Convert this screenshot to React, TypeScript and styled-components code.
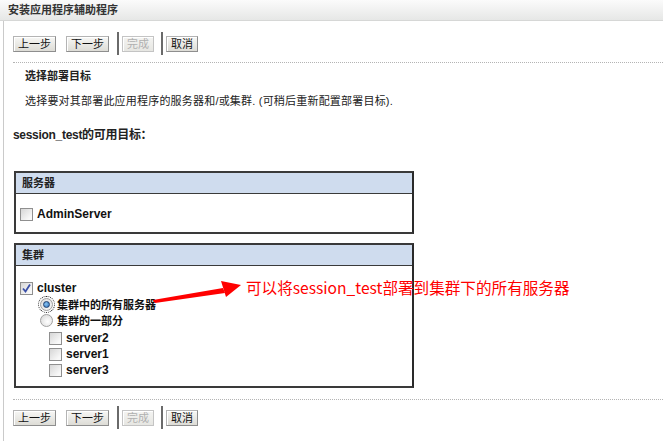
import React from 'react';
import styled, { createGlobalStyle, css } from 'styled-components';

const GlobalStyle = createGlobalStyle`
  html, body {
    margin: 0;
    padding: 0;
    background: #fff;
  }
  body {
    font-family: "Liberation Sans", "Noto Sans CJK SC", sans-serif;
    font-size: 11px;
    color: #222;
  }
`;

const Page = styled.div`
  position: relative;
  width: 663px;
  height: 441px;
  overflow: hidden;
`;

const TitleBar = styled.div`
  height: 20px;
  line-height: 20px;
  padding-left: 8px;
  font-weight: bold;
  font-size: 11px;
  color: #333;
  background: linear-gradient(#fbfbfb, #e6e7e6);
  border-bottom: 1px solid #d6d7d6;
`;

const Body = styled.div`
  margin-left: 3px;
  border-left: 1px solid #cacaca;
  padding-left: 9px;
  height: 420px;
  display: flex;
  flex-direction: column;
`;

const Toolbar = styled.div<{ $top: number }>`
  display: flex;
  align-items: center;
  height: 23px;
  margin-top: ${p => p.$top}px;
`;

const Btn = styled.div<{ $disabled?: boolean; $gap?: number }>`
  height: 14px;
  line-height: 14px;
  padding: 0 4px;
  margin-left: ${p => p.$gap ?? 0}px;
  font-size: 11px;
  color: #111;
  border: 1px solid #8e8e8e;
  border-top-color: #b4b4b4;
  border-left-color: #b4b4b4;
  box-shadow: inset 1px 1px 0 #fff;
  background: linear-gradient(#f7f7f5, #dddcd6);
  ${p => p.$disabled && css`
    color: #b0b0b0;
    border-color: #c4c4c4;
    background: linear-gradient(#f4f4f2, #e6e6e2);
  `}
`;

const Sep = styled.div<{ $gap: number }>`
  width: 2px;
  height: 23px;
  margin-left: ${p => p.$gap}px;
  background: #6a6a6a;
`;

const Dotted = styled.div<{ $top: number }>`
  margin-top: ${p => p.$top}px;
  border-top: 1px dotted #b4b4b4;
  height: 0;
`;

const SectionTitle = styled.div`
  margin-top: 5px;
  padding-left: 12px;
  line-height: 16px;
  font-weight: bold;
`;

const Description = styled.div`
  margin-top: 9px;
  padding-left: 12px;
  line-height: 16px;
  letter-spacing: 0.2px;
`;

const TargetsLabel = styled.div`
  margin-top: 18px;
  line-height: 16px;
  font-weight: bold;
  font-size: 12px;
  letter-spacing: -0.3px;
`;

const Box = styled.div<{ $top: number }>`
  margin-top: ${p => p.$top}px;
  margin-left: 1px;
  width: 396px;
  border: 2px solid #3a3a3a;
  border-right-color: #2a2a2a;
`;

const BoxHead = styled.div`
  height: 20px;
  line-height: 20px;
  padding-left: 6px;
  font-weight: bold;
  background: #cfdcee;
  border-bottom: 1px solid #3a3a3a;
`;

const BoxBody = styled.div<{ $pt: number; $pb: number }>`
  padding: ${p => p.$pt}px 0 ${p => p.$pb}px 4px;
`;

const Row = styled.div<{ $indent?: number; $mt?: number }>`
  display: flex;
  align-items: center;
  height: 16px;
  padding-left: ${p => p.$indent ?? 0}px;
  margin-top: ${p => p.$mt ?? 0}px;
  font-weight: bold;
`;

const Label = styled.span<{ $latin?: boolean }>`
  margin-left: 4px;
  font-size: ${p => (p.$latin ? 12 : 11)}px;
  color: #111;
`;

const CheckBox = styled.span`
  position: relative;
  width: 11px;
  height: 11px;
  border: 1px solid #8f8f8f;
  background: linear-gradient(135deg, #d6d6d6, #f8f8f8 80%);
  flex: none;
`;

const Tick = styled.svg`
  position: absolute;
  left: 0;
  top: 0;
`;

const Radio = styled.span<{ $on?: boolean }>`
  position: relative;
  width: 11px;
  height: 11px;
  border-radius: 50%;
  border: 1px solid #a0a0a0;
  background: radial-gradient(circle at 60% 60%, #ffffff, #d4d4d4);
  flex: none;
  ${p => p.$on && css`
    outline: 1px dotted #222;
    outline-offset: 1px;
    &::after {
      content: '';
      position: absolute;
      left: 2px;
      top: 2px;
      width: 5px;
      height: 5px;
      border-radius: 50%;
      border: 1px solid #1c3f70;
      background: radial-gradient(circle at 40% 40%, #8cc6f2, #2a6cb8);
    }
  `}
`;

const Overlay = styled.svg`
  position: absolute;
  left: 0;
  top: 0;
  pointer-events: none;
`;

const Note = styled.div`
  position: absolute;
  left: 246px;
  top: 277px;
  line-height: 20px;
  font-family: "Noto Sans CJK SC", "Liberation Sans", sans-serif;
  font-size: 15.6px;
  color: #ff0000;
  white-space: nowrap;
`;

function Buttons({ top }: { top: number }) {
  return (
    <Toolbar $top={top}>
      <Btn>上一步</Btn>
      <Btn $gap={10}>下一步</Btn>
      <Sep $gap={8} />
      <Btn $gap={3} $disabled>完成</Btn>
      <Sep $gap={7} />
      <Btn $gap={3}>取消</Btn>
    </Toolbar>
  );
}

function Check({ checked }: { checked?: boolean }) {
  return (
    <CheckBox>
      {checked && (
        <Tick width="11" height="11" viewBox="0 0 11 11">
          <path d="M2 5.5 L4.5 8.5 L9 1.5" fill="none" stroke="#3a4fa8" strokeWidth="1.8" />
        </Tick>
      )}
    </CheckBox>
  );
}

export default function App() {
  return (
    <Page>
      <GlobalStyle />
      <TitleBar>安装应用程序辅助程序</TitleBar>
      <Body>
        <Buttons top={11} />
        <Dotted $top={7} />
        <SectionTitle>选择部署目标</SectionTitle>
        <Description>选择要对其部署此应用程序的服务器和/或集群. (可稍后重新配置部署目标).</Description>
        <TargetsLabel>session_test的可用目标：</TargetsLabel>

        <Box $top={28}>
          <BoxHead>服务器</BoxHead>
          <BoxBody $pt={12} $pb={10}>
            <Row>
              <Check />
              <Label $latin>AdminServer</Label>
            </Row>
          </BoxBody>
        </Box>

        <Box $top={9}>
          <BoxHead>集群</BoxHead>
          <BoxBody $pt={14} $pb={8}>
            <Row>
              <Check checked />
              <Label $latin>cluster</Label>
            </Row>
            <Row $indent={20}>
              <Radio $on />
              <Label>集群中的所有服务器</Label>
            </Row>
            <Row $indent={20}>
              <Radio />
              <Label>集群的一部分</Label>
            </Row>
            <Row $indent={29} $mt={2}>
              <Check />
              <Label $latin>server2</Label>
            </Row>
            <Row $indent={29}>
              <Check />
              <Label $latin>server1</Label>
            </Row>
            <Row $indent={29}>
              <Check />
              <Label $latin>server3</Label>
            </Row>
          </BoxBody>
        </Box>

        <Dotted $top={11} />
        <Buttons top={6} />
      </Body>

      <Overlay width="663" height="441" viewBox="0 0 663 441">
        <polygon points="153,300 155,303 225,293 223,288" fill="#ff0000" />
        <polygon points="221,281 241,285 226,297" fill="#ff0000" />
      </Overlay>
      <Note>可以将session_test部署到集群下的所有服务器</Note>
    </Page>
  );
}
